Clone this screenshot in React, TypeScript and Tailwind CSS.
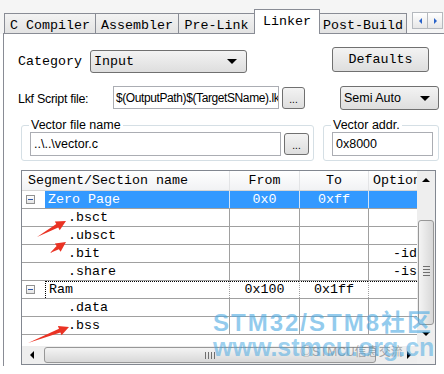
import React from "react";

type Row = {
  name: string;
  top?: boolean;
  from?: string;
  to?: string;
  opt?: string;
  selected?: boolean;
  focus?: boolean;
};

const rows: Row[] = [
  { name: "Zero Page", top: true, from: "0x0", to: "0xff", selected: true },
  { name: ".bsct" },
  { name: ".ubsct" },
  { name: ".bit", opt: "-ida" },
  { name: ".share", opt: "-isa" },
  { name: "Ram", top: true, from: "0x100", to: "0x1ff", focus: true },
  { name: ".data" },
  { name: ".bss" },
];

const mono = "font-['Liberation_Mono','DejaVu_Sans_Mono',monospace] text-[13.33px]";
const sans = "font-['Liberation_Sans',Arial,sans-serif]";

function Tri({ dir, color = "#000", size = 4 }: { dir: "up" | "down" | "left" | "right"; color?: string; size?: number }) {
  const s = size;
  const pts =
    dir === "down"
      ? `0,0 ${s * 2},0 ${s},${s}`
      : dir === "up"
      ? `0,${s} ${s * 2},${s} ${s},0`
      : dir === "left"
      ? `${s},0 ${s},${s * 2} 0,${s}`
      : `0,0 0,${s * 2} ${s},${s}`;
  const w = dir === "up" || dir === "down" ? s * 2 : s;
  const h = dir === "up" || dir === "down" ? s : s * 2;
  return (
    <svg width={w} height={h} viewBox={`0 0 ${w} ${h}`}>
      <polygon points={pts} fill={color} />
    </svg>
  );
}

function Tab({ label, w, active }: { label: string; w: string; active?: boolean }) {
  if (active)
    return (
      <div className={`relative z-10 -ml-px flex h-[25px] justify-center border border-b-0 border-[#898c95] bg-white pt-[2px] ${w}`}>
        <span className={mono}>{label}</span>
      </div>
    );
  return (
    <div className={`-ml-px flex h-[21px] justify-center border border-[#898c95] bg-gradient-to-b from-[#f3f3f3] to-[#e3e3e3] pt-[2px] ${w}`}>
      <span className={mono}>{label}</span>
    </div>
  );
}

function Arrow({ x1, y1, x2, y2 }: { x1: number; y1: number; x2: number; y2: number }) {
  const dx = x2 - x1;
  const dy = y2 - y1;
  const len = Math.hypot(dx, dy);
  const ux = dx / len;
  const uy = dy / len;
  const nx = -uy;
  const ny = ux;
  const headLen = 10;
  const headW = 5;
  const bx = x2 - ux * headLen;
  const by = y2 - uy * headLen;
  const p = (x: number, y: number) => `${x.toFixed(1)},${y.toFixed(1)}`;
  const pts = [
    p(x1, y1),
    p(bx + nx * 2, by + ny * 2),
    p(bx + nx * headW, by + ny * headW),
    p(x2, y2),
    p(bx - nx * headW, by - ny * headW),
    p(bx - nx * 2, by - ny * 2),
  ].join(" ");
  return <polygon points={pts} fill="#ea3324" />;
}

function TableRow({ r }: { r: Row }) {
  const line = r.selected ? "border-[#cfe4fb]" : "border-[#a0a0a0]";
  return (
    <div className={`flex h-[18px] border-b border-[#a0a0a0] ${mono}`}>
      <div className="flex w-[207px]">
        <div className="flex w-[23px] items-center pl-[4px]">
          {r.top && (
            <div className="flex h-[9px] w-[9px] items-center justify-center border border-[#919191] bg-gradient-to-b from-white to-[#e4e4e4]">
              <div className="h-px w-[5px] bg-[#2c56a8]" />
            </div>
          )}
        </div>
        <div
          className={`flex flex-1 items-center whitespace-pre ${r.top ? "pl-[3px]" : "pl-[23px]"} ${
            r.selected ? "bg-[#3399ff] text-white" : "text-black"
          } ${r.focus ? "border-l border-t border-dotted border-black" : ""}`}
        >
          {r.name}
        </div>
      </div>
      <div className={`flex w-[70px] items-center justify-center border-l ${line} ${r.selected ? "bg-[#3399ff] text-white" : ""} ${r.focus ? "border-t border-t-black border-dotted" : ""}`}>
        {r.from}
      </div>
      <div className={`flex w-[69px] items-center justify-center border-l ${line} ${r.selected ? "bg-[#3399ff] text-white" : ""} ${r.focus ? "border-t border-t-black border-dotted" : ""}`}>
        {r.to}
      </div>
      <div className={`flex w-[49px] items-center overflow-hidden whitespace-nowrap border-l pl-[24px] ${line} ${r.selected ? "bg-[#3399ff]" : ""} ${r.focus ? "border-t border-t-black border-dotted" : ""}`}>
        {r.opt}
      </div>
    </div>
  );
}

export default function App() {
  return (
    <div className="relative h-[374px] w-[444px] overflow-hidden bg-white text-black">
      {/* tabs */}
      <div className="flex h-[34px] items-end bg-[#f5f5f5] pl-[5px]">
        <Tab label="C Compiler" w="w-[92px]" />
        <Tab label="Assembler" w="w-[84px]" />
        <Tab label="Pre-Link" w="w-[77px]" />
        <Tab label="Linker" w="w-[66px]" active />
        <Tab label="Post-Build" w="w-[88px]" />
        <div className="mb-[5px] ml-[5px] flex">
          <div className="flex h-[17px] w-[16px] items-center justify-center border border-[#b5b9be] bg-gradient-to-b from-white to-[#e6e6e6]">
            <Tri dir="left" color="#2a63c9" size={3} />
          </div>
          <div className="-ml-px flex h-[17px] w-[16px] items-center justify-center border border-[#b5b9be] bg-gradient-to-b from-white to-[#e6e6e6]">
            <Tri dir="right" color="#2a63c9" size={3} />
          </div>
        </div>
      </div>

      {/* panel */}
      <div className="-mt-px ml-[3px] h-[333px] border-l border-t border-[#898c95] bg-white">
        {/* category row */}
        <div className="mt-[13px] flex h-[26px] items-start">
          <div className={`ml-[14px] mt-[5px] ${mono}`}>Category</div>
          <div className="ml-[8px] mt-[3px] flex h-[23px] w-[157px] items-center justify-between rounded-[3px] border border-[#707070] bg-gradient-to-b from-[#f3f3f3] to-[#dedede] pl-[3px] pr-[9px]">
            <span className={mono}>Input</span>
            <Tri dir="down" size={5} />
          </div>
          <div className={`ml-[85px] flex h-[25px] w-[97px] items-center justify-center rounded-[3px] border border-[#707070] bg-gradient-to-b from-[#f3f3f3] to-[#dedede] ${mono}`}>
            Defaults
          </div>
        </div>

        {/* lkf row */}
        <div className={`mt-[13px] flex h-[24px] items-start ${sans} text-[12.5px]`}>
          <div className="ml-[14px] mt-[4px] w-[95px] tracking-[-0.3px]">Lkf Script file:</div>
          <div className="flex h-[23px] w-[166px] items-center overflow-hidden whitespace-nowrap border border-[#abadb3] pl-[2px] text-[12px] tracking-[-0.4px]">
            $(OutputPath)$(TargetSName).lkf
          </div>
          <div className="ml-[3px] mt-px flex h-[22px] w-[23px] items-end justify-center rounded-[3px] border border-[#707070] bg-gradient-to-b from-[#f3f3f3] to-[#dedede] pb-[3px] text-[10px] leading-none">
            ...
          </div>
          <div className="ml-[35px] flex h-[24px] w-[99px] items-center justify-between rounded-[3px] border border-[#707070] bg-gradient-to-b from-[#f3f3f3] to-[#dedede] pl-[3px] pr-[8px]">
            <span>Semi Auto</span>
            <Tri dir="down" size={5} />
          </div>
        </div>

        {/* group boxes */}
        <div className={`mt-[8px] flex ${sans} text-[12.5px]`}>
          <fieldset className="ml-[17px] h-[43px] w-[293px] rounded-[3px] border border-[#d5dfe5] pl-[8px]">
            <legend className="ml-[-1px] px-[2px] leading-[14px]">Vector file name</legend>
            <div className="flex items-start">
              <div className="flex h-[24px] w-[251px] items-center border border-[#abadb3] pl-[3px]">..\..\vector.c</div>
              <div className="ml-[3px] mt-px flex h-[22px] w-[25px] items-end justify-center rounded-[3px] border border-[#707070] bg-gradient-to-b from-[#f3f3f3] to-[#dedede] pb-[3px] text-[10px] leading-none">
                ...
              </div>
            </div>
          </fieldset>
          <fieldset className="ml-[9px] h-[43px] w-[116px] rounded-[3px] border border-[#d5dfe5] pl-[8px]">
            <legend className="ml-[-1px] px-[2px] leading-[14px]">Vector addr.</legend>
            <div className="flex h-[24px] w-[101px] items-center border border-[#abadb3] pl-[3px]">0x8000</div>
          </fieldset>
        </div>

        {/* table */}
        <div className="ml-[17px] mt-[9px] h-[195px] w-[415px] border border-[#828790]">
          <div className="flex h-[175px]">
            <div className="w-[395px] overflow-hidden">
              <div className={`flex h-[20px] border-b border-[#d5d5d5] bg-gradient-to-b from-white to-[#f1f2f4] ${mono}`}>
                <div className="flex w-[207px] items-center pl-[6px]">Segment/Section name</div>
                <div className="flex w-[70px] items-center justify-center border-l border-[#e3e4e6]">From</div>
                <div className="flex w-[69px] items-center justify-center border-l border-[#e3e4e6]">To</div>
                <div className="flex w-[49px] items-center overflow-hidden whitespace-nowrap border-l border-[#e3e4e6] pl-[4px]">Options</div>
              </div>
              {rows.map((r) => (
                <TableRow key={r.name} r={r} />
              ))}
            </div>
            {/* vertical scrollbar */}
            <div className="flex w-[18px] flex-col items-center bg-[#eeeeee]">
              <div className="flex h-[18px] w-full items-center justify-center">
                <Tri dir="up" size={4} />
              </div>
              <div className="mt-[31px] h-[105px] w-[16px] rounded-[3px] border border-[#979797] bg-gradient-to-r from-[#f4f4f4] to-[#d8d8d8] pt-[45px]">
                <div className="mx-auto flex w-[7px] flex-col gap-[2px]">
                  <div className="h-px bg-[#6f6f6f]" />
                  <div className="h-px bg-[#6f6f6f]" />
                  <div className="h-px bg-[#6f6f6f]" />
                  <div className="h-px bg-[#6f6f6f]" />
                </div>
              </div>
              <div className="flex h-[18px] w-full items-center justify-center">
                <Tri dir="down" size={4} />
              </div>
            </div>
          </div>
          {/* horizontal scrollbar */}
          <div className="flex h-[18px] bg-[#eeeeee]">
            <div className="flex w-[395px] items-center">
              <div className="flex w-[20px] items-center justify-center">
                <Tri dir="left" size={4} />
              </div>
              <div className="ml-[2px] flex h-[16px] w-[332px] items-center justify-center gap-[2px] rounded-[3px] border border-[#979797] bg-gradient-to-b from-[#f4f4f4] to-[#d8d8d8]">
                <div className="h-[7px] w-px bg-[#6f6f6f]" />
                <div className="h-[7px] w-px bg-[#6f6f6f]" />
                <div className="h-[7px] w-px bg-[#6f6f6f]" />
                <div className="h-[7px] w-px bg-[#6f6f6f]" />
              </div>
              <div className="flex flex-1 items-center justify-end pr-[6px]">
                <Tri dir="right" size={4} />
              </div>
            </div>
            <div className="w-[18px] bg-[#f0f0f0]" />
          </div>
        </div>
      </div>

      {/* red annotation arrows */}
      <svg className="pointer-events-none absolute left-0 top-0" width="444" height="374">
        <Arrow x1={37} y1={237} x2={66} y2={221} />
        <Arrow x1={50} y1={253} x2={66} y2={242} />
        <Arrow x1={28} y1={343} x2={69} y2={327} />
      </svg>

      {/* watermark */}
      <div className="pointer-events-none absolute left-[213px] top-[311px] font-['Liberation_Sans','Noto_Sans_CJK_SC',sans-serif] text-[24px] font-bold leading-none tracking-[2px] text-[#4aa9e2]/60">
        STM32/STM8社区
      </div>
      <div className="pointer-events-none absolute left-[300px] top-[346px] font-['Liberation_Sans','Noto_Sans_CJK_SC',sans-serif] text-[12px] leading-none text-[#808080]/70">
        ◎STMCU信息交流
      </div>
      <div className="pointer-events-none absolute left-[213px] top-[335px] font-['Liberation_Sans',sans-serif] text-[25px] font-bold leading-none text-[#4aa9e2]/55">
        www.stmcu.org.cn
      </div>
    </div>
  );
}
